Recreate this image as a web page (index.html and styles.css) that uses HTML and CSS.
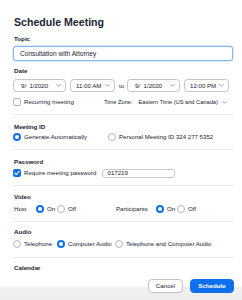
FILE: index.html
```html
<!DOCTYPE html>
<html lang="en">
<head>
<meta charset="utf-8">
<title>Schedule Meeting</title>
<link rel="stylesheet" href="styles.css">
</head>
<body>
<main class="form">
  <section class="section first">
    <h1 class="title">Schedule Meeting</h1>
    <div class="label l-topic">Topic</div>
    <div class="textbox focus">Consultation with Attorney</div>
    <div class="label l-date">Date</div>
    <div class="daterow">
      <div class="select date"><span>9/&nbsp; 1/2020</span><svg class="chev" viewBox="0 0 6 4" width="5" height="3"><polyline points="0.5,0.5 3,3 5.5,0.5" fill="none" stroke="#6e6e7a" stroke-width="0.9"/></svg></div>
      <div class="select time"><span>11:00 AM</span><svg class="chev" viewBox="0 0 6 4" width="5" height="3"><polyline points="0.5,0.5 3,3 5.5,0.5" fill="none" stroke="#6e6e7a" stroke-width="0.9"/></svg></div>
      <span class="to">to</span>
      <div class="select date"><span>9/&nbsp; 1/2020</span><svg class="chev" viewBox="0 0 6 4" width="5" height="3"><polyline points="0.5,0.5 3,3 5.5,0.5" fill="none" stroke="#6e6e7a" stroke-width="0.9"/></svg></div>
      <div class="select time"><span>12:00 PM</span><svg class="chev" viewBox="0 0 6 4" width="5" height="3"><polyline points="0.5,0.5 3,3 5.5,0.5" fill="none" stroke="#6e6e7a" stroke-width="0.9"/></svg></div>
    </div>
    <div class="row r-recur">
      <span class="opt w-recur"><span class="check"></span>Recurring meeting</span>
      <span class="tz">Time Zone:<span class="tzval">Eastern Time (US and Canada)</span><svg class="chev" viewBox="0 0 6 4" width="5" height="3"><polyline points="0.5,0.5 3,3 5.5,0.5" fill="none" stroke="#6e6e7a" stroke-width="0.9"/></svg></span>
    </div>
  </section>

  <section class="section s-mid">
    <div class="label">Meeting ID</div>
    <div class="row">
      <span class="opt w-gen"><span class="radio on"></span>Generate Automatically</span>
      <span class="opt"><span class="radio"></span>Personal Meeting ID 324 277 5352</span>
    </div>
  </section>

  <section class="section s-pass">
    <div class="label">Password</div>
    <div class="row r-pass">
      <span class="opt"><span class="check on"><svg viewBox="0 0 8 8" width="8" height="8"><polyline points="1.8,4.1 3.3,5.6 6.2,2.4" fill="none" stroke="#fff" stroke-width="1.1" stroke-linecap="round" stroke-linejoin="round"/></svg></span>Require meeting password</span>
      <span class="textbox pass">017219</span>
    </div>
  </section>

  <section class="section s-video">
    <div class="label">Video</div>
    <div class="row r-video">
      <span class="who host">Host</span>
      <span class="opt w-on"><span class="radio on"></span>On</span>
      <span class="opt w-off1"><span class="radio"></span>Off</span>
      <span class="who part">Participants</span>
      <span class="opt w-on"><span class="radio on"></span>On</span>
      <span class="opt"><span class="radio"></span>Off</span>
    </div>
  </section>

  <section class="section s-audio">
    <div class="label">Audio</div>
    <div class="row r-audio">
      <span class="opt w-tel"><span class="radio"></span>Telephone</span>
      <span class="opt w-comp"><span class="radio on"></span>Computer Audio</span>
      <span class="opt"><span class="radio"></span>Telephone and Computer Audio</span>
    </div>
  </section>

  <section class="section last">
    <div class="label">Calendar</div>
  </section>
</main>
<footer class="footer">
  <button class="btn cancel" type="button">Cancel</button>
  <button class="btn primary" type="button">Schedule</button>
</footer>
</body>
</html>
```

FILE: styles.css
```css
* { box-sizing: border-box; }

html, body {
  margin: 0;
  padding: 0;
}

body {
  width: 242px;
  height: 300px;
  overflow: hidden;
  background: #ffffff;
  color: #232333;
  font-family: "Liberation Sans", Arial, sans-serif;
  font-size: 6.1px;
}

.form {
  padding: 14px 9px 0 13px;
}

.section {
  padding: 7px 0 7px;
  border-bottom: 1px solid #e9e9ec;
}

.section.first { padding-top: 0; }
.section.s-video { padding-top: 6px; }
.section.s-audio { padding-top: 5px; padding-bottom: 8px; }
.section.last { padding-top: 5px; padding-bottom: 0; border-bottom: none; }

.title {
  margin: 0 0 0 1px;
  font-size: 10.6px;
  font-weight: 700;
  line-height: 16px;
  color: #232333;
}

.label {
  margin-left: 1px;
  font-size: 6.2px;
  font-weight: 700;
  line-height: 10px;
  color: #232333;
}

.l-topic { margin-top: 4px; }
.l-date { margin-top: 5px; }

.textbox {
  display: flex;
  align-items: center;
  border: 1px solid #c8c8cc;
  border-radius: 3px;
  background: #fff;
  color: #232333;
}

.textbox.focus {
  margin-top: 2px;
  height: 15px;
  padding-left: 6px;
  font-size: 6.6px;
  border-color: #86b8f6;
  box-shadow: 0 0 0 0.5px #b9d6fb;
}

.daterow {
  display: flex;
  align-items: center;
  margin-top: 3px;
  height: 13px;
}

.select {
  display: flex;
  align-items: center;
  justify-content: space-between;
  height: 13px;
  border: 1px solid #c4c4c9;
  border-radius: 3.5px;
  padding: 0 4px 0 7px;
  font-size: 6.1px;
}

.select.date { width: 53px; }
.select.time { width: 45px; padding-left: 5px; }
.select + .select { margin-left: 4px; }

.chev { display: block; }

.to {
  margin: 0 3px 0 4px;
  line-height: 13px;
}

.row {
  display: flex;
  align-items: center;
  height: 10px;
  line-height: 10px;
}

.r-recur { margin-top: 5px; }
.r-pass { margin-top: 1px; }
.r-video { margin-top: 2px; }
.r-audio { margin-top: 2px; }

.opt {
  display: inline-flex;
  align-items: center;
  gap: 3px;
  white-space: nowrap;
}

.w-recur { width: 91px; }
.w-gen { width: 95px; }
.w-on { width: 21px; }
.w-off1 { width: 59px; }
.w-tel { width: 44px; }
.w-comp { width: 58px; }

.tz {
  display: inline-flex;
  align-items: center;
  white-space: nowrap;
  font-size: 5.7px;
}

.tzval { margin: 0 4px 0 6px; }

.check {
  display: inline-flex;
  align-items: center;
  justify-content: center;
  width: 8px;
  height: 8px;
  border: 1px solid #b5b5bb;
  border-radius: 2px;
  background: #fff;
}

.check.on {
  border: none;
  background: #0e71eb;
}

.check svg { display: block; }

.radio {
  display: inline-block;
  width: 8px;
  height: 8px;
  border: 1px solid #b5b5bb;
  border-radius: 50%;
  background: #fff;
}

.radio.on {
  border: 2.5px solid #0e71eb;
  background: #fff;
}

.textbox.pass {
  margin-left: 5px;
  width: 73px;
  height: 9px;
  padding-left: 5px;
  font-size: 6.1px;
}

.who { white-space: nowrap; }
.host { width: 22px; margin-left: 1px; }
.part { width: 40px; }

.footer {
  display: flex;
  justify-content: flex-end;
  gap: 7px;
  height: 27px;
  padding: 6px 8px 0 0;
  background: linear-gradient(to bottom, #ffffff 0, #ffffff 12px, #f0f0f1 15px, #ededee 100%);
}

.btn {
  height: 14px;
  margin: 0;
  padding: 0;
  border-radius: 4px;
  font-family: "Liberation Sans", Arial, sans-serif;
  font-size: 6.2px;
  line-height: 12px;
  cursor: pointer;
}

.btn.cancel {
  width: 35px;
  border: 1px solid #c2c2c7;
  background: #fff;
  color: #232333;
}

.btn.primary {
  width: 44px;
  border: 1px solid #0e71eb;
  background: #0e71eb;
  color: #fff;
  font-weight: 700;
}
```
